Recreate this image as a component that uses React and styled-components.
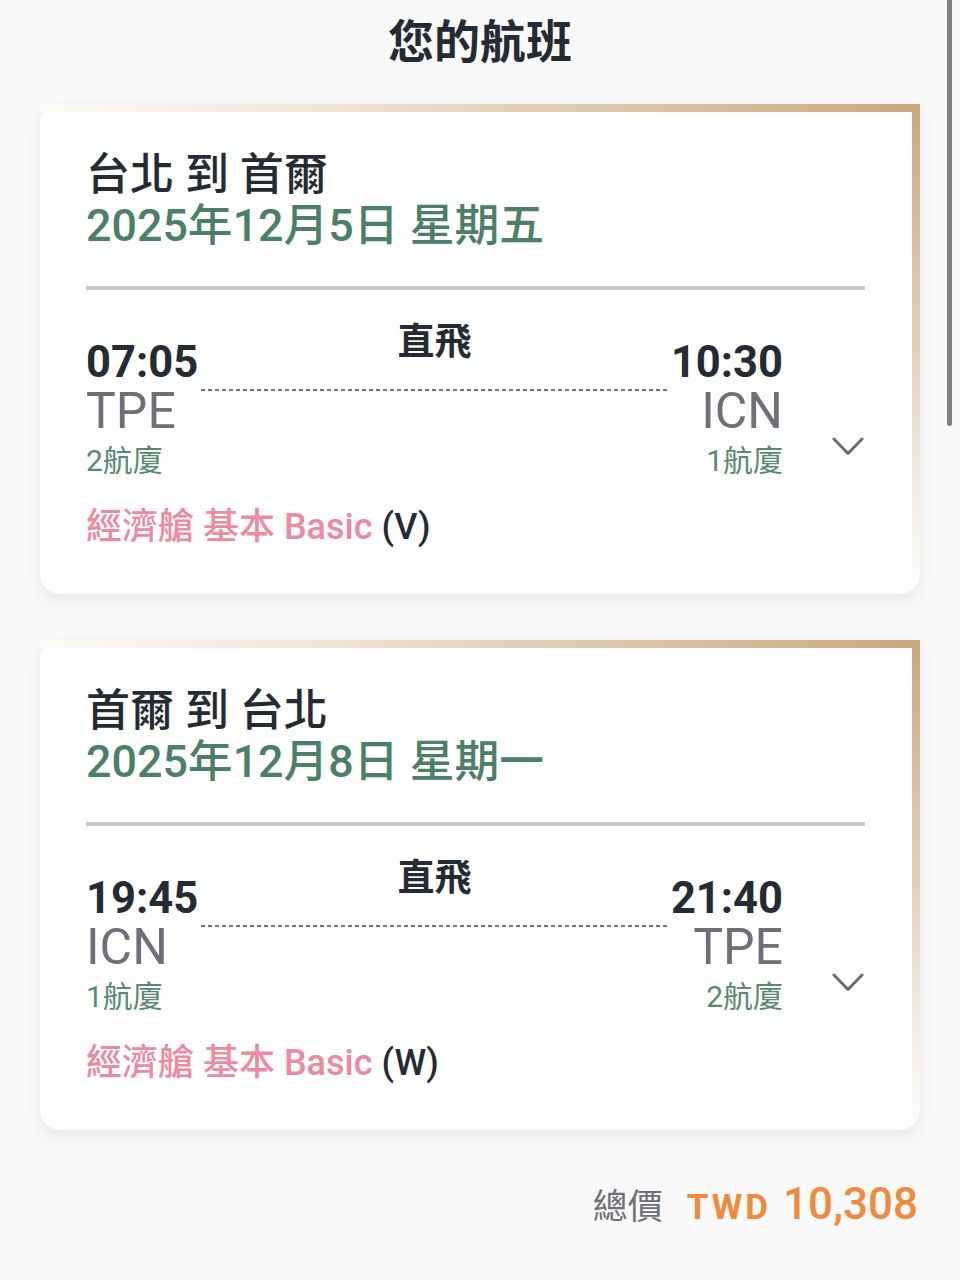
import React from "react";
import styled, { createGlobalStyle } from "styled-components";

const flights = [
    {
        route: "台北 到 首爾",
        date: "2025年12月5日 星期五",
        depTime: "07:05",
        depCode: "TPE",
        depTerminal: "2航廈",
        arrTime: "10:30",
        arrCode: "ICN",
        arrTerminal: "1航廈",
        fare: "經濟艙 基本 Basic",
        fareClass: "(V)",
    },
    {
        route: "首爾 到 台北",
        date: "2025年12月8日 星期一",
        depTime: "19:45",
        depCode: "ICN",
        depTerminal: "1航廈",
        arrTime: "21:40",
        arrCode: "TPE",
        arrTerminal: "2航廈",
        fare: "經濟艙 基本 Basic",
        fareClass: "(W)",
    },
];

const Chevron = () => (
    <svg width="32" height="20" viewBox="0 0 32 20" fill="none">
        <polyline
            points="2,2 16,16.5 30,2"
            stroke="#6b6f78"
            strokeWidth="3"
            strokeLinecap="round"
            strokeLinejoin="round"
        />
    </svg>
);

const FlightCard = ({ flight }) => (
    <Card>
        <Route>{flight.route}</Route>
        <DateLine>{flight.date}</DateLine>
        <Divider />
        <FlightRow>
            <Endpoint>
                <Time>{flight.depTime}</Time>
                <Code>{flight.depCode}</Code>
                <Terminal>{flight.depTerminal}</Terminal>
            </Endpoint>
            <Middle>
                <Direct>直飛</Direct>
                <Dotted />
            </Middle>
            <Endpoint $right>
                <Time>{flight.arrTime}</Time>
                <Code>{flight.arrCode}</Code>
                <Terminal>{flight.arrTerminal}</Terminal>
            </Endpoint>
            <Toggle>
                <Chevron />
            </Toggle>
        </FlightRow>
        <Fare>
            {flight.fare} <FareClass>{flight.fareClass}</FareClass>
        </Fare>
    </Card>
);

const App = () => {
    return (
        <Page>
            <GlobalStyle />
            <Title>您的航班</Title>
            {flights.map((f) => (
                <FlightCard key={f.date} flight={f} />
            ))}
            <Total>
                <TotalLabel>總價</TotalLabel>
                <Currency>TWD</Currency>
                <Amount>10,308</Amount>
            </Total>
            <Scrollbar />
        </Page>
    );
};

export default App;

const GlobalStyle = createGlobalStyle`
    body {
        margin: 0;
        background: #f9f9f9;
        font-family: Roboto, "Noto Sans CJK TC", sans-serif;
    }
`;

const Page = styled.div`
    min-height: 1280px;
    padding: 12px 40px 0;
    box-sizing: border-box;
    display: flex;
    flex-direction: column;
`;

const Title = styled.h1`
    margin: 0 0 32px;
    text-align: center;
    font-size: 46px;
    line-height: 60px;
    font-weight: 700;
    color: #252b33;
`;

const Card = styled.div`
    position: relative;
    background: #fff;
    border-radius: 20px 0 20px 20px;
    box-shadow: 0 6px 16px rgba(0, 0, 0, 0.08);
    padding: 46px 55px 45px 46px;
    margin-bottom: 46px;

    &::before {
        content: "";
        position: absolute;
        top: 0;
        left: 0;
        right: 0;
        height: 8px;
        border-top-left-radius: 20px;
        background: linear-gradient(90deg, #fffcf8 0%, #f1e6d7 30%, #c9a77c 100%);
    }

    &::after {
        content: "";
        position: absolute;
        top: 0;
        right: 0;
        bottom: 0;
        width: 8px;
        background: linear-gradient(180deg, #c9a77c 0%, #e6d6c1 55%, rgba(255, 255, 255, 0) 100%);
    }
`;

const Route = styled.div`
    font-size: 44px;
    line-height: 50px;
    font-weight: 500;
    color: #252b33;
`;

const DateLine = styled.div`
    font-size: 44.8px;
    line-height: 52px;
    font-weight: 500;
    color: #4b8068;
`;

const Divider = styled.div`
    height: 4px;
    background: #c8c9c9;
    margin: 34px 0 31px;
`;

const FlightRow = styled.div`
    display: grid;
    grid-template-columns: auto 1fr auto 82px;
    align-items: start;
`;

const Endpoint = styled.div`
    display: flex;
    flex-direction: column;
    align-items: ${(p) => (p.$right ? "flex-end" : "flex-start")};
    margin-top: 19px;
`;

const Time = styled.div`
    font-size: 43.5px;
    line-height: 46px;
    font-weight: 700;
    color: #252b33;
`;

const Code = styled.div`
    font-size: 50px;
    line-height: 50px;
    color: #6d7079;
`;

const Terminal = styled.div`
    font-size: 30px;
    line-height: 50px;
    color: #558a70;
`;

const Middle = styled.div`
    display: flex;
    flex-direction: column;
    align-items: center;
    padding: 0 3px;
`;

const Direct = styled.div`
    font-size: 37px;
    line-height: 44px;
    font-weight: 700;
    color: #252b33;
`;

const Dotted = styled.div`
    align-self: stretch;
    height: 2px;
    margin-top: 24px;
    background: repeating-linear-gradient(90deg, #6f7178 0 4px, transparent 4px 7px);
`;

const Toggle = styled.div`
    align-self: end;
    justify-self: end;
    margin: 0 1px 29px 0;
    display: flex;
`;

const Fare = styled.div`
    margin-top: 19px;
    font-size: 36px;
    line-height: 44px;
    font-weight: 500;
    color: #ec8aa0;
`;

const FareClass = styled.span`
    color: #252b33;
`;

const Total = styled.div`
    display: flex;
    justify-content: flex-end;
    align-items: baseline;
    margin-top: 0;
    padding-right: 2px;
    line-height: 56px;
`;

const TotalLabel = styled.span`
    font-size: 35px;
    color: #6d7079;
    margin-right: 24px;
`;

const Currency = styled.span`
    font-size: 35px;
    font-weight: 700;
    letter-spacing: 3px;
    color: #f08a3c;
    margin-right: 12px;
`;

const Amount = styled.span`
    font-size: 44px;
    font-weight: 500;
    color: #f08a3c;
`;

const Scrollbar = styled.div`
    position: fixed;
    top: -4px;
    right: 8px;
    width: 5px;
    height: 430px;
    border-radius: 3px;
    background: #7f7f7f;
`;
